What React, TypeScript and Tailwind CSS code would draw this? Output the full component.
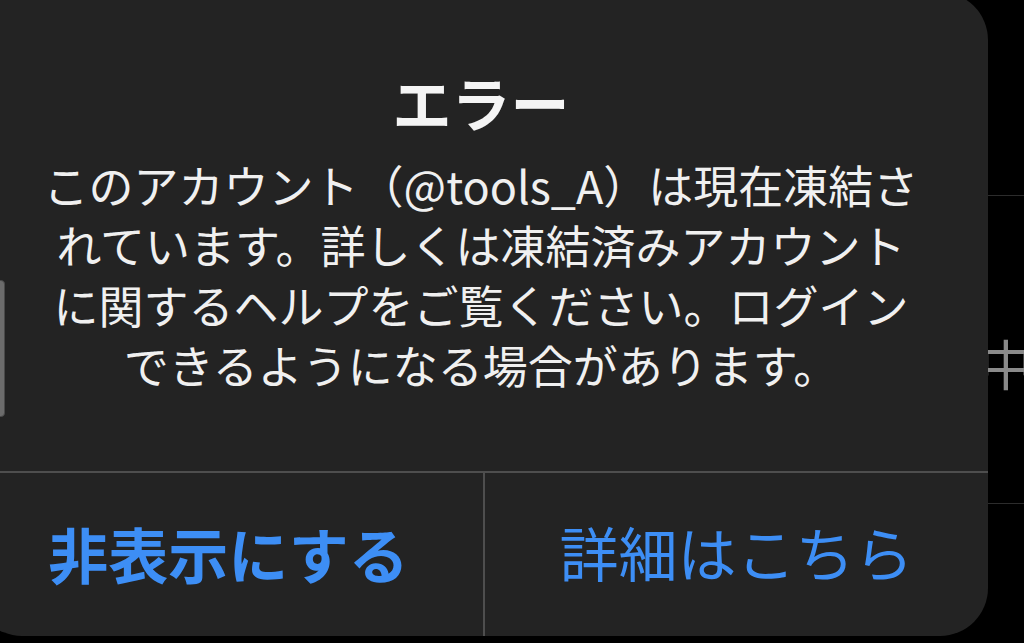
export default function App() {
  const bodyLines = [
    'このアカウント（@tools_A）は現在凍結さ',
    'れています。詳しくは凍結済みアカウント',
    'に関するヘルプをご覧ください。ログイン',
    'できるようになる場合があります。',
  ]

  return (
    <div
      className="relative flex h-[643px] w-[1024px] overflow-hidden bg-black"
      style={{ fontFamily: '"Noto Sans CJK JP", "Noto Sans", sans-serif' }}
    >
      {/* alert panel */}
      <div className="relative z-10 -ml-[26px] -mt-[8px] flex h-[644px] w-[1014px] shrink-0 flex-col rounded-[48px] bg-[#232323]">
        <div className="flex flex-col items-center pt-[80px]">
          <h1 className="text-[59px] font-bold leading-[60px] text-[#f4f4f4]">エラー</h1>
          <div className="mt-[23px] flex flex-col items-center">
            {bodyLines.map((line) => (
              <p key={line} className="whitespace-nowrap text-[45px] leading-[60px] text-[#f0f0f0]">
                {line}
              </p>
            ))}
          </div>
        </div>
        <div className="mt-auto flex h-[165px] border-t-2 border-[#4e4e4e]">
          <button className="flex w-[509px] items-center justify-center pb-[4px] text-[60px] font-bold text-[#3d8ef5]">
            非表示にする
          </button>
          <div className="w-[2px] bg-[#4e4e4e]" />
          <button className="flex flex-1 items-center justify-center pb-[4px] text-[59px] text-[#3d8ef5]">
            詳細はこちら
          </button>
        </div>
      </div>

      {/* background list behind the alert */}
      <div className="flex flex-1 flex-col overflow-hidden">
        <div className="h-[196px] shrink-0 border-b border-[#2c2c2c]" />
        <div className="-ml-[9px] mt-[140px] text-[54px] leading-[54px] text-[#8a8a8a]">中</div>
        <div className="h-[114px] shrink-0 border-b border-[#2c2c2c]" />
      </div>

      {/* sliver of a control on the left edge */}
      <div className="absolute left-[-4px] top-[280px] z-20 h-[137px] w-[9px] rounded-[4px] border border-[#4a4a4a] bg-[#6c6c6c]" />
    </div>
  )
}
